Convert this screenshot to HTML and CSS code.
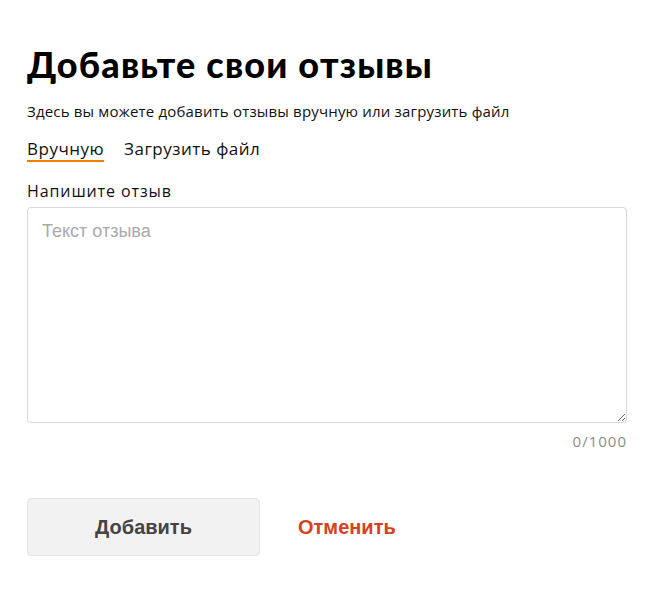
FILE: index.html
```html
<!DOCTYPE html>
<html lang="ru">
<head>
<meta charset="utf-8">
<link rel="stylesheet" href="styles.css">
</head>
<body>
<main class="page">
  <h1 class="title">Добавьте свои отзывы</h1>
  <p class="subtitle">Здесь вы можете добавить отзывы вручную или загрузить файл</p>
  <nav class="tabs">
    <span class="tab tab-active">Вручную</span>
    <span class="tab">Загрузить файл</span>
  </nav>
  <label class="label" for="review">Напишите отзыв</label>
  <textarea id="review" class="textarea" placeholder="Текст отзыва"></textarea>
  <div class="counter">0/1000</div>
  <div class="actions">
    <button class="btn-add">Добавить</button>
    <button class="btn-cancel">Отменить</button>
  </div>
</main>
</body>
</html>
```
FILE: styles.css
```css
* { box-sizing: border-box; }
html, body { margin: 0; background: #fff; }
body { font-family: "Open Sans", "Noto Sans", sans-serif; color: #111; }
.page {
  width: 667px;
  padding: 42px 40px 0 27px;
  display: flex;
  flex-direction: column;
}
.title {
  margin: 0;
  font-family: Lato, sans-serif;
  font-size: 36px;
  font-weight: 900;
  line-height: 44px;
  color: #000;
  letter-spacing: 1.2px;
}
.subtitle {
  margin: 16px 0 0;
  font-size: 15px;
  line-height: 19px;
  letter-spacing: 0.18px;
  color: #111;
}
.tabs {
  display: flex;
  gap: 20px;
  margin-top: 17px;
}
.tab {
  font-size: 17px;
  line-height: 22px;
  letter-spacing: 0.5px;
  border-bottom: 2px solid transparent;
}
.tab-active { border-bottom-color: #f07d00; }
.label {
  margin-top: 19px;
  font-size: 16px;
  line-height: 20px;
  letter-spacing: 0.9px;
}
.textarea {
  margin-top: 6px;
  width: 600px;
  height: 216px;
  border: 1px solid #d9d9d9;
  border-radius: 4px;
  padding: 13px 14px;
  font-family: "Liberation Sans", Arial, sans-serif;
  font-size: 18px;
  resize: vertical;
  outline: none;
}
.textarea::placeholder { color: #aaa; }
.counter {
  width: 600px;
  text-align: right;
  margin-top: 9px;
  font-size: 15px;
  line-height: 18px;
  letter-spacing: 1px;
  color: #8c8c8c;
}
.actions {
  display: flex;
  align-items: center;
  gap: 38px;
  margin-top: 48px;
}
.btn-add {
  width: 233px;
  height: 58px;
  background: #f2f2f2;
  border: 1px solid #e4e4e4;
  border-radius: 4px;
  font-family: "Liberation Sans", Arial, sans-serif;
  font-weight: 700;
  font-size: 20px;
  color: #444;
}
.btn-cancel {
  background: none;
  border: none;
  padding: 0;
  font-family: "Liberation Sans", Arial, sans-serif;
  font-weight: 700;
  font-size: 20px;
  color: #d84120;
}
```
